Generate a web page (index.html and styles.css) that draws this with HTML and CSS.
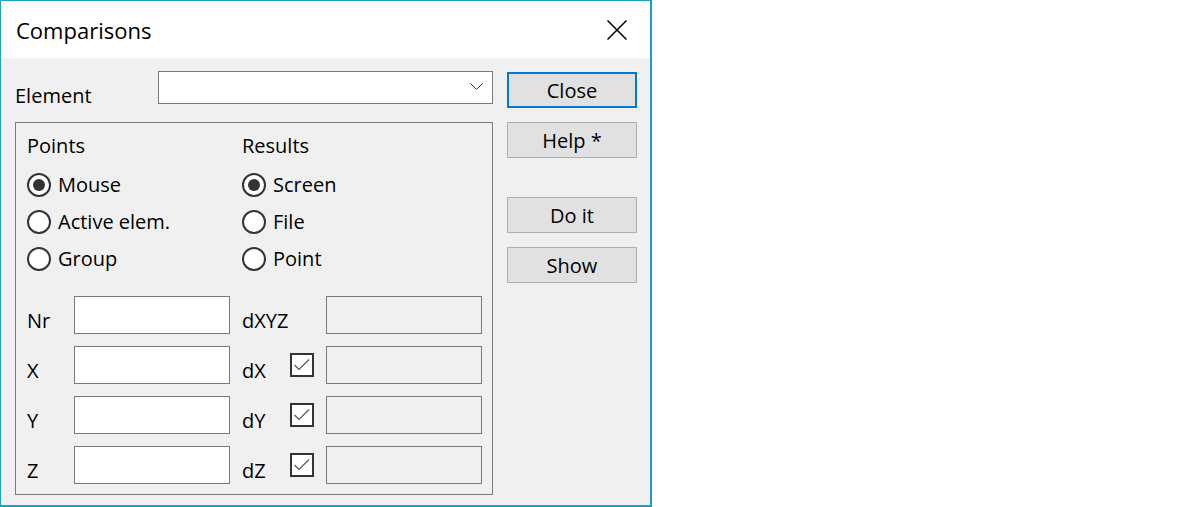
FILE: index.html
```html
<!DOCTYPE html>
<html>
<head>
	<title>Comparisons</title>
	<link rel="stylesheet" href="styles.css">
</head>
<body>
	<div class = "window">
		<div class = "titlebar">
			<span class = "title">Comparisons</span>
			<svg class = "close-x" width="20" height="20" viewBox="0 0 20 20">
				<path d="M0.5 0.5 L19.5 19.5 M19.5 0.5 L0.5 19.5" stroke="#000" stroke-width="1.5" fill="none"/>
			</svg>
		</div>
		<div class = "body">
			<div class = "main">
				<div class = "element-row">
					<span class = "element-label">Element</span>
					<div class = "combo">
						<svg width="13" height="7" viewBox="0 0 13 7">
							<path d="M0.5 0.5 L6.5 6.5 L12.5 0.5" stroke="#333" stroke-width="1" fill="none"/>
						</svg>
					</div>
				</div>
				<div class = "group">
					<div class = "options">
						<div class = "opt-col">
							<div class = "heading">Points</div>
							<div class = "radio checked"><span class = "dot"></span>Mouse</div>
							<div class = "radio"><span class = "dot"></span>Active elem.</div>
							<div class = "radio"><span class = "dot"></span>Group</div>
						</div>
						<div class = "opt-col">
							<div class = "heading">Results</div>
							<div class = "radio checked"><span class = "dot"></span>Screen</div>
							<div class = "radio"><span class = "dot"></span>File</div>
							<div class = "radio"><span class = "dot"></span>Point</div>
						</div>
					</div>
					<div class = "coords">
						<span class = "lbl">Nr</span>
						<div class = "edit"></div>
						<span class = "lbl dlbl">dXYZ</span>
						<span></span>
						<div class = "edit readonly"></div>

						<span class = "lbl">X</span>
						<div class = "edit"></div>
						<span class = "lbl dlbl">dX</span>
						<span class = "check"><svg width="20" height="20" viewBox="0 0 20 20"><path d="M2.5 10 L7 14.5 L17 4.5" stroke="#555" stroke-width="1.2" fill="none"/></svg></span>
						<div class = "edit readonly"></div>

						<span class = "lbl">Y</span>
						<div class = "edit"></div>
						<span class = "lbl dlbl">dY</span>
						<span class = "check"><svg width="20" height="20" viewBox="0 0 20 20"><path d="M2.5 10 L7 14.5 L17 4.5" stroke="#555" stroke-width="1.2" fill="none"/></svg></span>
						<div class = "edit readonly"></div>

						<span class = "lbl">Z</span>
						<div class = "edit"></div>
						<span class = "lbl dlbl">dZ</span>
						<span class = "check"><svg width="20" height="20" viewBox="0 0 20 20"><path d="M2.5 10 L7 14.5 L17 4.5" stroke="#555" stroke-width="1.2" fill="none"/></svg></span>
						<div class = "edit readonly"></div>
					</div>
				</div>
			</div>
			<div class = "buttons">
				<div class = "btn default">Close</div>
				<div class = "btn">Help *</div>
				<div class = "btn spaced">Do it</div>
				<div class = "btn">Show</div>
			</div>
		</div>
	</div>
</body>
</html>
```

FILE: styles.css
```css
		*{
			padding: 0;
			margin: 0;
			box-sizing: border-box;
		}
		body{
			background: #fff;
			font-family: "Open Sans", "Noto Sans", sans-serif;
			font-size: 20px;
			color: #000;
		}
		.window{
			width: 652px;
			height: 507px;
			border: 1px solid #1ba1c5;
			border-right-width: 2px;
			border-bottom-width: 2px;
			display: flex;
			flex-direction: column;
		}
		.titlebar{
			height: 57px;
			background: #fff;
			display: flex;
			align-items: center;
			justify-content: space-between;
			padding-left: 15px;
			padding-right: 23px;
		}
		.title{
			font-size: 22px;
		}
		.body{
			flex: 1;
			background: #f0f0f0;
			display: flex;
			gap: 14px;
			padding: 13px 0 0 14px;
		}
		.main{
			width: 478px;
		}
		.element-row{
			display: flex;
			align-items: flex-end;
			height: 33px;
		}
		.element-label{
			width: 143px;
			line-height: 20px;
			margin-bottom: -2px;
		}
		.combo{
			width: 336px;
			height: 33px;
			background: #fff;
			border: 1px solid #7a7a7a;
			display: flex;
			align-items: center;
			justify-content: flex-end;
			padding-right: 9px;
			padding-bottom: 2px;
		}
		.group{
			margin-top: 18px;
			height: 373px;
			border: 1px solid #7a7a7a;
			padding: 4px 0 0 11px;
		}
		.options{
			display: flex;
		}
		.opt-col{
			width: 215px;
		}
		.heading{
			height: 37px;
			margin-bottom: 2px;
			display: flex;
			align-items: center;
		}
		.radio{
			height: 37px;
			display: flex;
			align-items: center;
			gap: 7px;
		}
		.dot{
			width: 24px;
			height: 24px;
			border: 2px solid #333;
			border-radius: 50%;
			background: #fff;
			display: flex;
			align-items: center;
			justify-content: center;
		}
		.checked .dot::after{
			content: "";
			width: 12px;
			height: 12px;
			border-radius: 50%;
			background: #333;
		}
		.coords{
			margin-top: 19px;
			display: grid;
			grid-template-columns: 47px 156px 60px 36px 156px;
			grid-auto-rows: 38px;
			row-gap: 12px;
		}
		.lbl{
			align-self: end;
			line-height: 20px;
			padding-bottom: 3px;
		}
		.dlbl{
			padding-left: 12px;
		}
		.edit{
			background: #fff;
			border: 1px solid #7a7a7a;
		}
		.edit.readonly{
			background: #f0f0f0;
		}
		.check{
			align-self: center;
			width: 24px;
			height: 24px;
			border: 2px solid #333;
			background: #fff;
			display: block;
		}
		.check svg{
			display: block;
		}
		.buttons{
			width: 130px;
			margin-top: 1px;
		}
		.btn{
			height: 36px;
			background: #e1e1e1;
			border: 1px solid #adadad;
			display: flex;
			align-items: center;
			justify-content: center;
			margin-bottom: 14px;
		}
		.btn.default{
			border: 2px solid #0078d7;
		}
		.btn.spaced{
			margin-top: 39px;
		}
```
